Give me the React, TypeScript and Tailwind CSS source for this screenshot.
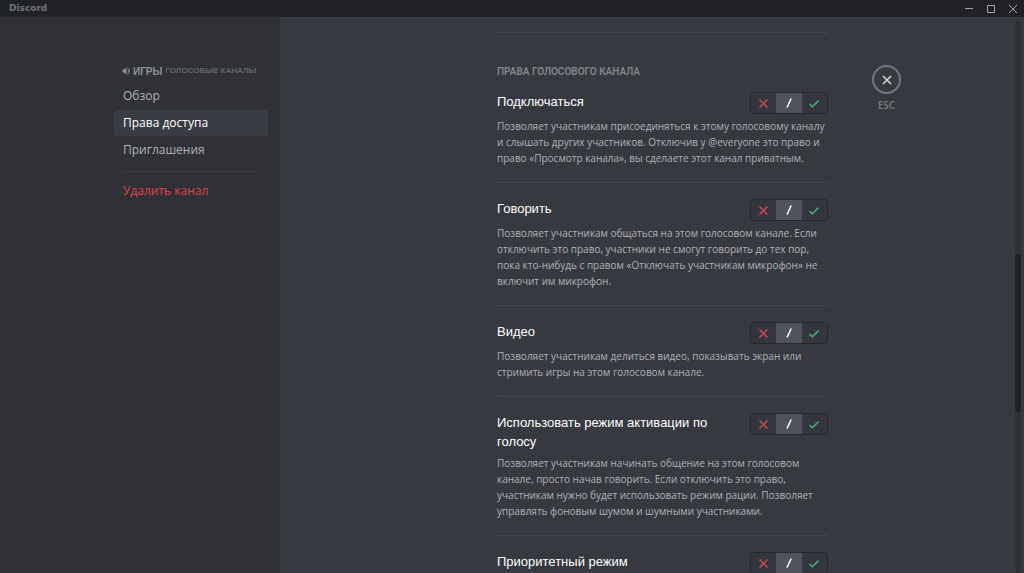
import { useState } from "react";

type Access = "deny" | "neutral" | "allow";

const navItems = ["Обзор", "Права доступа", "Приглашения"];

const permissions = [
  {
    id: "connect",
    title: "Подключаться",
    text: "Позволяет участникам присоединяться к этому голосовому каналу и слышать других участников. Отключив у @everyone это право и право «Просмотр канала», вы сделаете этот канал приватным.",
  },
  {
    id: "speak",
    title: "Говорить",
    text: "Позволяет участникам общаться на этом голосовом канале. Если отключить это право, участники не смогут говорить до тех пор, пока кто-нибудь с правом «Отключать участникам микрофон» не включит им микрофон.",
  },
  {
    id: "video",
    title: "Видео",
    text: "Позволяет участникам делиться видео, показывать экран или стримить игры на этом голосовом канале.",
  },
  {
    id: "vad",
    title: "Использовать режим активации по голосу",
    text: "Позволяет участникам начинать общение на этом голосовом канале, просто начав говорить. Если отключить это право, участникам нужно будет использовать режим рации. Позволяет управлять фоновым шумом и шумными участниками.",
  },
  { id: "priority", title: "Приоритетный режим", text: "" },
];

const options: { value: Access; label: string; color: string; path: string }[] = [
  { value: "deny", label: "Запретить", color: "text-[#d0484d]", path: "M3.5 4.5l8 8M11.5 4.5l-8 8" },
  { value: "neutral", label: "По умолчанию", color: "text-white", path: "M10.2 3.5L6 12.5" },
  { value: "allow", label: "Разрешить", color: "text-[#4bae78]", path: "M3.5 9l2.8 2.8 6.2-6.2" },
];

function PermissionSwitch({ name }: { name: string }) {
  const [value, setValue] = useState<Access>("neutral");

  return (
    <div role="group" aria-label={name} className="flex h-[22px] w-[78px] shrink-0 overflow-hidden rounded-[3px] border border-[#25272b]">
      {options.map((o) => (
        <button
          key={o.value}
          type="button"
          aria-label={o.label}
          aria-pressed={value === o.value}
          onClick={() => setValue(o.value)}
          className={`flex flex-1 items-center justify-center ${o.color} ${value === o.value ? "bg-[#4f545c]" : "bg-[#33363c]"}`}
        >
          <svg viewBox="0 0 16 16" className="size-4" fill="none" stroke="currentColor" strokeWidth="1.5">
            <path d={o.path} />
          </svg>
        </button>
      ))}
    </div>
  );
}

function TitleBar() {
  return (
    <header className="flex h-[17px] shrink-0 items-center justify-between bg-[#202225] pr-[6px] pl-[9px] text-[#a3a6aa]">
      <span className="font-['DejaVu_Sans',sans-serif] text-[9px] font-bold text-[#72767d]">Discord</span>
      <div className="flex gap-3">
        <button type="button" aria-label="Свернуть">
          <svg viewBox="0 0 10 10" className="size-[10px]" stroke="currentColor"><path d="M1 4.5h8" /></svg>
        </button>
        <button type="button" aria-label="Развернуть">
          <svg viewBox="0 0 10 10" className="size-[10px]" fill="none" stroke="currentColor"><path d="M1.5 1.5h7v7h-7z" /></svg>
        </button>
        <button type="button" aria-label="Закрыть окно">
          <svg viewBox="0 0 10 10" className="size-[10px]" stroke="currentColor"><path d="M1 1l8 8M9 1l-8 8" /></svg>
        </button>
      </div>
    </header>
  );
}

function Sidebar() {
  const [active, setActive] = useState("Права доступа");

  return (
    <aside className="flex w-[280px] shrink-0 justify-end bg-[#2f3136] pt-[47px] pr-3">
      <nav className="w-[154px] font-['Open_Sans',sans-serif] text-[12px] font-medium">
        <h2 className="flex h-[14px] items-center gap-[3px] pl-2 font-['Liberation_Sans',sans-serif] whitespace-nowrap">
          <svg viewBox="0 0 16 16" className="size-[8px] shrink-0 text-[#8e9297]" fill="currentColor">
            <path d="M1 5h3l5-4v14l-5-4H1z" />
            <path d="M11 4.5a4 4 0 010 7M11 1.5a7 7 0 010 13" fill="none" stroke="currentColor" strokeWidth="1.5" />
          </svg>
          <span className="text-[10px] font-bold text-[#8e9297]">ИГРЫ</span>
          <span className="text-[8px] font-bold text-[#62666d]">ГОЛОСОВЫЕ КАНАЛЫ</span>
        </h2>
        <div className="mt-[5px] flex flex-col gap-px">
          {navItems.map((item) => (
            <button
              key={item}
              type="button"
              onClick={() => setActive(item)}
              className={`h-[26px] rounded-[3px] pl-[9px] text-left ${item === active ? "bg-[#393c43] text-white" : "text-[#b0b3b8]"}`}
            >
              {item}
            </button>
          ))}
        </div>
        <hr className="mt-2 mr-2 mb-[6px] ml-2 border-[#3a3d43]" />
        <button type="button" className="h-[26px] w-full pl-[9px] text-left text-[#e0444a]">Удалить канал</button>
      </nav>
    </aside>
  );
}

export default function App() {
  return (
    <div className="flex h-screen flex-col overflow-hidden bg-[#36393f] font-['Noto_Sans',sans-serif]">
      <TitleBar />
      <div className="flex min-h-0 flex-1">
        <Sidebar />
        <main className="flex min-w-0 flex-1 gap-11 overflow-hidden pl-[217px]">
          <section className="max-w-[331px] flex-1 pt-[15px]">
            <hr className="border-[#42454b]" />
            <h2 className="mt-8 mb-[13px] font-['Roboto',sans-serif] text-[10px] leading-[14px] font-semibold text-[#83878d]">
              ПРАВА ГОЛОСОВОГО КАНАЛА
            </h2>
            <div className="flex flex-col gap-4">
              {permissions.map((p) => (
                <article key={p.id} className="border-b border-[#42454b] pb-4">
                  <div className="flex items-start justify-between gap-4">
                    <h3 className="font-['Liberation_Sans',sans-serif] text-[13px] leading-[19px] font-medium text-white">{p.title}</h3>
                    <PermissionSwitch name={p.title} />
                  </div>
                  {p.text && <p className="mt-1 font-['Open_Sans',sans-serif] text-[10px] leading-4 text-[#b0b3b7]">{p.text}</p>}
                </article>
              ))}
            </div>
          </section>
          <div className="flex flex-col items-center gap-[5px] pt-12 text-[#72767d]">
            <button type="button" aria-label="Закрыть настройки" className="flex size-[29px] items-center justify-center rounded-full border-2 border-[#72767d] text-[#dcddde]">
              <svg viewBox="0 0 10 10" className="size-[10px]" stroke="currentColor" strokeWidth="1.5"><path d="M1 1l8 8M9 1l-8 8" /></svg>
            </button>
            <span className="text-[10px] leading-[12px] font-semibold">ESC</span>
          </div>
        </main>
        <div className="mt-1 mr-[3px] w-[6px] shrink-0 rounded-full bg-[#2f3237] pt-[233px]">
          <div className="h-[158px] rounded-full bg-[#202225]" />
        </div>
      </div>
    </div>
  );
}
